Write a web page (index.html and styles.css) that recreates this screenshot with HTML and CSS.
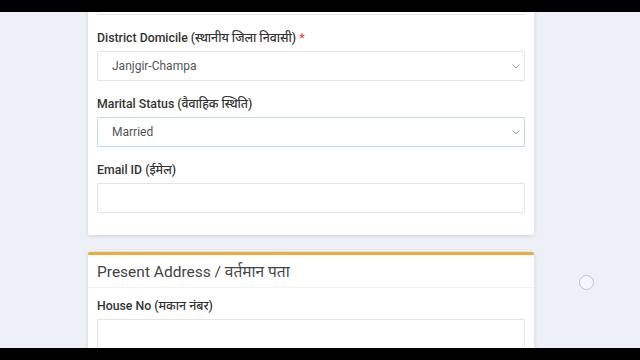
FILE: index.html
```html
<!DOCTYPE html>
<html lang="hi">
<head>
    <meta charset="UTF-8">
    <meta name="viewport" content="width=device-width, initial-scale=1.0">
    <title>आवेदन पत्र</title>
    <link rel="stylesheet" href="styles.css">
</head>
<body>
    <div class="screen-top"></div>

    <div class="page">
        <div class="card card-personal">
            <div class="form-group first">
                <div class="form-control"></div>
            </div>

            <div class="form-group">
                <label>District Domicile (स्थानीय जिला निवासी) <span class="req">*</span></label>
                <div class="form-control select">
                    <span>Janjgir-Champa</span>
                    <svg class="caret" width="8" height="5" viewBox="0 0 8 5"><path d="M0.5 0.5 L4 4 L7.5 0.5" fill="none" stroke="#9a9a9a" stroke-width="1"/></svg>
                </div>
            </div>

            <div class="form-group">
                <label>Marital Status (वैवाहिक स्थिति)</label>
                <div class="form-control select focused">
                    <span>Married</span>
                    <svg class="caret" width="8" height="5" viewBox="0 0 8 5"><path d="M0.5 0.5 L4 4 L7.5 0.5" fill="none" stroke="#9a9a9a" stroke-width="1"/></svg>
                </div>
            </div>

            <div class="form-group">
                <label>Email ID (ईमेल)</label>
                <div class="form-control"></div>
            </div>
        </div>

        <div class="card card-address">
            <div class="card-header">Present Address / वर्तमान पता</div>
            <div class="card-body">
                <div class="form-group">
                    <label>House No (मकान नंबर)</label>
                    <div class="form-control"></div>
                </div>
            </div>
        </div>
    </div>

    <div class="float-dot"></div>
    <div class="screen-bottom"></div>
</body>
</html>
```

FILE: styles.css
```css
* {
    margin: 0;
    padding: 0;
    box-sizing: border-box;
}

body {
    font-family: Roboto, 'Noto Sans', sans-serif;
    background: #eef0f7;
    height: 360px;
    overflow: hidden;
    color: #333;
}

.screen-top,
.screen-bottom {
    position: fixed;
    left: 0;
    right: 0;
    background: #000;
    z-index: 5;
}

.screen-top {
    top: 0;
    height: 12px;
}

.screen-bottom {
    bottom: 0;
    height: 12px;
}

.page {
    width: 446px;
    margin-left: 88px;
    margin-top: -15px;
}

.card {
    background: #fff;
    border-radius: 2px;
    box-shadow: 0 1px 4px rgba(0, 0, 0, 0.13);
}

.card-personal {
    padding: 0 9px 22px;
}

.form-group {
    padding-top: 16px;
}

.form-group.first {
    padding-top: 0;
}

.form-group label {
    display: block;
    font-size: 12.3px;
    line-height: 14px;
    font-weight: 500;
    color: #333;
    margin-bottom: 6px;
}

.req {
    color: #e74c3c;
}

.form-control {
    height: 30px;
    border: 1px solid #e4e4e4;
    border-radius: 1px;
    background: #fff;
    font-size: 12px;
    color: #555;
    padding: 0 14px;
    display: flex;
    align-items: center;
    justify-content: space-between;
}

.form-control.focused {
    border-color: #c4d8e6;
}

.caret {
    margin-right: -10px;
}

.card-address {
    margin-top: 17px;
    border-top: 3px solid #efac3c;
}

.card-header {
    height: 33px;
    padding: 0 9px;
    display: flex;
    align-items: center;
    font-size: 15.5px;
    color: #444;
    border-bottom: 1px solid #f2f2f2;
}

.card-body {
    padding: 0 9px 20px;
}

.card-body .form-group {
    padding-top: 11px;
}

.float-dot {
    position: fixed;
    left: 579px;
    top: 275px;
    width: 15px;
    height: 15px;
    border-radius: 50%;
    border: 1.5px solid #afc3e0;
    background: #f7f8fc;
}
```
